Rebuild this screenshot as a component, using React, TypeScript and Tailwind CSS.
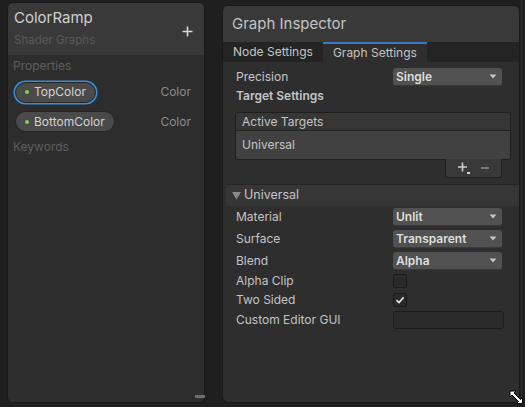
import React from "react";

const font = "font-['Inter','Noto_Sans',sans-serif]";

function Dropdown({ value }: { value: string }) {
  return (
    <div className="w-[109px] h-[18px] rounded-[3px] bg-[#515151] border-b border-[#3a3a3a] flex items-center justify-between pl-[3px] pr-[5px]">
      <span className="text-[12px] font-semibold text-[#dedede] leading-none">{value}</span>
      <svg width="8" height="5" viewBox="0 0 8 5">
        <polygon points="0.5,0.5 7.5,0.5 4,4.5" fill="#c4c4c4" />
      </svg>
    </div>
  );
}

function Checkbox({ checked }: { checked?: boolean }) {
  return (
    <div className="w-[14px] h-[14px] rounded-[2px] bg-[#2a2a2a] border border-[#1a1a1a] flex items-center justify-center">
      {checked && (
        <svg width="10" height="10" viewBox="0 0 10 10">
          <path d="M1.5 5.2 L4 7.6 L8.6 2.4" stroke="#e6e6e6" strokeWidth="1.6" fill="none" />
        </svg>
      )}
    </div>
  );
}

function Row({ label, children, className }: { label: string; children: React.ReactNode; className: string }) {
  return (
    <div className={`flex items-center pl-[13px] ${className}`}>
      <span className="w-[157px] text-[12px] text-[#c4c4c4]">{label}</span>
      {children}
    </div>
  );
}

function Pill({ name, selected }: { name: string; selected?: boolean }) {
  return (
    <div
      className={`h-[21px] rounded-full bg-[#4a4a4a] border border-[#232323] flex items-center pl-[9px] pr-[9px] ${
        selected ? "shadow-[0_0_0_1.5px_#3a8fd8]" : ""
      }`}
    >
      <span className="w-[4px] h-[4px] rounded-full bg-[#85d34a]" />
      <span className="ml-[5px] text-[12px] text-[#d2d2d2] leading-none">{name}</span>
    </div>
  );
}

export default function App() {
  return (
    <div className={`relative w-[525px] h-[407px] bg-[#1f1f1f] overflow-hidden flex ${font}`}>
      {/* blackboard */}
      <div className="relative ml-[7px] mt-[2px] w-[198px] h-[401px] rounded-[6px] bg-[#2d2d2d] border border-[#1a1a1a] flex flex-col">
        <div className="relative h-[52px] bg-[#393939] rounded-t-[5px] pl-[6px] pt-[6px]">
          <div className="text-[15px] leading-[18px] text-[#d0d0d0]">ColorRamp</div>
          <div className="mt-[6px] text-[11.5px] leading-[14px] text-[#5a5a5a]">Shader Graphs</div>
          <svg className="absolute left-[174px] top-[23px]" width="11" height="11" viewBox="0 0 11 11">
            <path d="M5.5 0.5 V10.5 M0.5 5.5 H10.5" stroke="#d8d8d8" strokeWidth="1.6" />
          </svg>
        </div>
        <div className="h-[22px] flex items-center pl-[5px] text-[12px] text-[#5e5e5e]">Properties</div>
        <div className="h-[30px] flex items-center justify-between pl-[7px] pr-[13px]">
          <Pill name="TopColor" selected />
          <span className="text-[12px] text-[#8c8c8c]">Color</span>
        </div>
        <div className="h-[29px] flex items-center justify-between pl-[7px] pr-[13px]">
          <Pill name="BottomColor" />
          <span className="text-[12px] text-[#8c8c8c]">Color</span>
        </div>
        <div className="h-[22px] flex items-center pl-[5px] text-[12px] text-[#5e5e5e]">Keywords</div>
        <div className="absolute right-[-1px] bottom-[4px] w-[10px] h-[3px] bg-[#6e6e6e]" />
      </div>

      {/* graph inspector */}
      <div className="relative ml-[17px] mt-[5px] w-[298px] h-[398px] rounded-[6px] bg-[#2e2e2e] border border-[#1a1a1a] flex flex-col">
        <div className="h-[36px] bg-[#393939] rounded-t-[5px] flex items-center pl-[9px] text-[15px] text-[#c4c4c4]">
          Graph Inspector
        </div>
        <div className="h-[20px] bg-[#242424] flex">
          <div className="px-[10px] flex items-center text-[12px] text-[#c4c4c4]">Node Settings</div>
          <div className="px-[10px] flex items-center text-[12px] text-[#c4c4c4] bg-[#2e2e2e] border-t-2 border-[#3a79bb]">
            Graph Settings
          </div>
        </div>

        <Row label="Precision" className="mt-[6px] h-[18px]">
          <Dropdown value="Single" />
        </Row>
        <div className="h-[20px] flex items-center pl-[13px] text-[12px] font-semibold text-[#c4c4c4]">
          Target Settings
        </div>

        <div className="ml-[12px] mt-[6px] w-[276px] rounded-[3px] border border-[#1f1f1f] overflow-hidden">
          <div className="h-[18px] bg-[#363636] border-b border-[#232323] flex items-center pl-[6px] text-[12px] text-[#c4c4c4]">
            Active Targets
          </div>
          <div className="h-[28px] bg-[#414141] flex items-center pl-[6px] text-[12px] text-[#c4c4c4]">
            Universal
          </div>
        </div>
        <div className="ml-[222px] w-[57px] h-[19px] -mt-px bg-[#393939] border border-t-0 border-[#1f1f1f] rounded-b-[3px] flex items-center justify-around px-[6px]">
          <svg width="14" height="14" viewBox="0 0 14 14">
            <path d="M5.5 1.5 V10.5 M1 6 H10" stroke="#d0d0d0" strokeWidth="1.6" />
            <rect x="10" y="11" width="3" height="2" fill="#d0d0d0" />
          </svg>
          <svg width="10" height="10" viewBox="0 0 10 10">
            <path d="M1 5 H9" stroke="#8a8a8a" strokeWidth="1.6" />
          </svg>
        </div>

        <div className="mt-[6px] ml-[3px] h-[22px] bg-[#363636] border-t border-[#262626] flex items-center pl-[6px]">
          <svg width="9" height="8" viewBox="0 0 9 8">
            <polygon points="0,0 9,0 4.5,7.5" fill="#8a8a8a" />
          </svg>
          <span className="ml-[3px] text-[12.5px] text-[#c4c4c4]">Universal</span>
        </div>

        <Row label="Material" className="mt-[2px] h-[18px]">
          <Dropdown value="Unlit" />
        </Row>
        <Row label="Surface" className="mt-[4px] h-[18px]">
          <Dropdown value="Transparent" />
        </Row>
        <Row label="Blend" className="mt-[4px] h-[18px]">
          <Dropdown value="Alpha" />
        </Row>
        <Row label="Alpha Clip" className="mt-[1px] h-[19px]">
          <Checkbox />
        </Row>
        <Row label="Two Sided" className="h-[19px]">
          <Checkbox checked />
        </Row>
        <Row label="Custom Editor GUI" className="mt-[2px] h-[18px]">
          <div className="w-[111px] h-[18px] rounded-[3px] bg-[#2a2a2a] border border-[#1c1c1c]" />
        </Row>
      </div>

      <div className="absolute left-[521px] top-0 w-px h-[403px] bg-[#2c2c2c]" />

      {/* resize cursor */}
      <svg className="absolute left-[508px] top-[389px]" width="17" height="17" viewBox="0 0 17 17">
        <path
          d="M2 2 L8 2 L6 4 L12.5 10.5 L14.5 8.5 L14.5 14.5 L8.5 14.5 L10.5 12.5 L4 6 L2 8 Z"
          fill="#ffffff"
          stroke="#000000"
          strokeWidth="1"
          strokeLinejoin="miter"
        />
      </svg>
    </div>
  );
}
